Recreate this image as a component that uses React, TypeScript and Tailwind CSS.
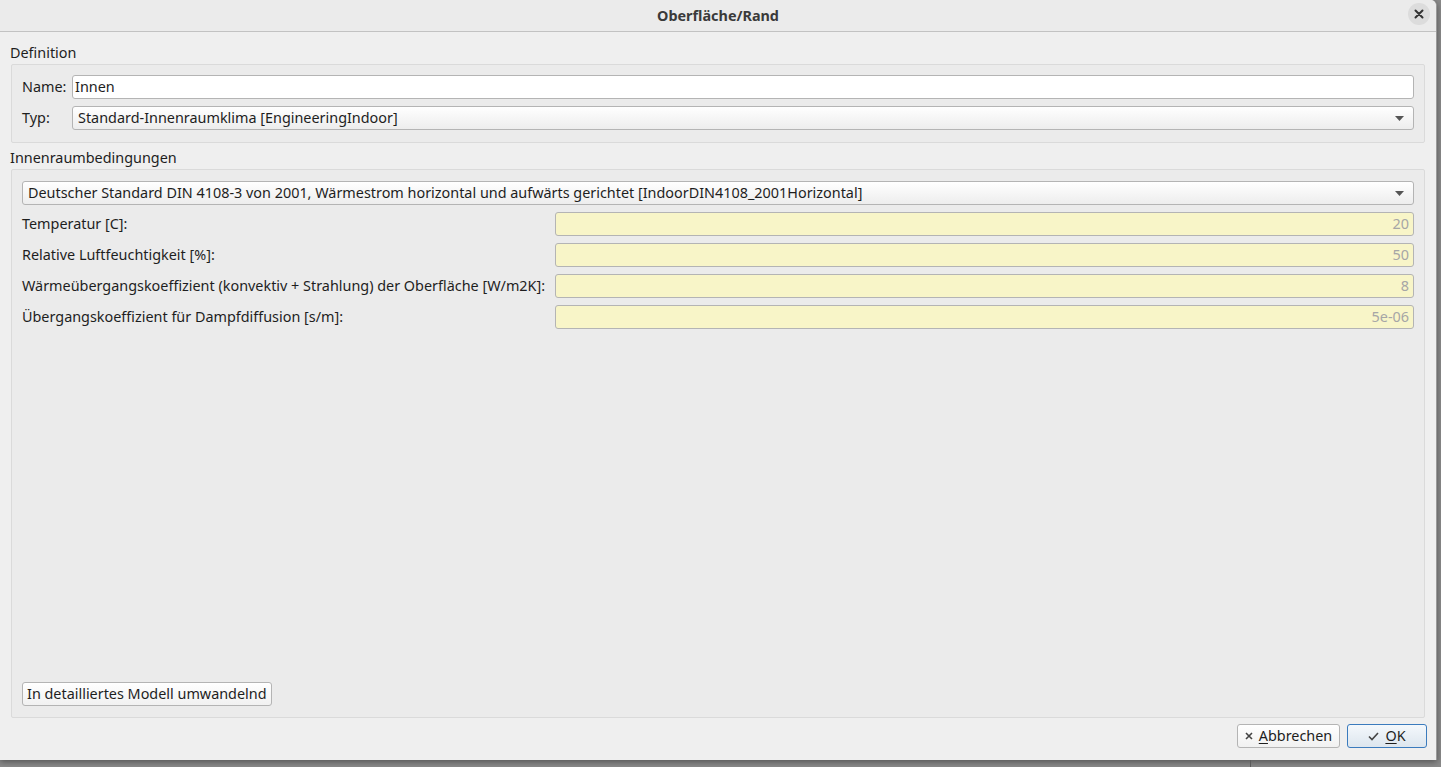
import React from "react";

// ----------------------------------------------------
// Dialog: Oberfläche/Rand (Innenraumklima)
// ----------------------------------------------------

type Param = { label: string; value: string };

const params: Param[] = [
  { label: "Temperatur [C]:", value: "20" },
  { label: "Relative Luftfeuchtigkeit [%]:", value: "50" },
  {
    label:
      "Wärmeübergangskoeffizient (konvektiv + Strahlung) der Oberfläche [W/m2K]:",
    value: "8",
  },
  { label: "Übergangskoeffizient für Dampfdiffusion [s/m]:", value: "5e-06" },
];

function ComboBox({ text }: { text: string }) {
  return (
    <div className="flex h-6 items-center justify-between rounded-[3px] border border-[#b4b4b4] bg-gradient-to-b from-white to-[#ededed] pl-[5px] pr-[9px]">
      <span className="truncate">{text}</span>
      {/* kleiner Dropdown-Pfeil */}
      <svg width="9" height="5" viewBox="0 0 9 5" className="shrink-0">
        <path d="M0 0 H9 L4.5 5 Z" fill="#555" />
      </svg>
    </div>
  );
}

function GroupBox({
  title,
  className,
  children,
}: {
  title: string;
  className?: string;
  children: React.ReactNode;
}) {
  return (
    <div className={`flex flex-col ${className ?? ""}`}>
      <div className="h-[22px] pl-[10px] leading-[22px]">{title}</div>
      <div className="mx-[11px] flex flex-1 flex-col rounded-[2px] border border-[#dadada] bg-[#ebebeb] px-[10px]">
        {children}
      </div>
    </div>
  );
}

export default function App() {
  return (
    <div
      className="relative h-[767px] w-[1441px] overflow-hidden bg-[#8a8a8a] text-[14.4px] text-[#1e1e1e]"
      style={{ fontFamily: '"Noto Sans", "Open Sans", sans-serif' }}
    >
      {/* Fenster */}
      <div className="flex h-[760px] w-[1437px] flex-col overflow-hidden rounded-tr-[6px] border-r border-[#9a9a9a] bg-[#efefef] shadow-[0_2px_6px_rgba(0,0,0,0.4)]">
        {/* Titelleiste */}
        <div className="relative flex h-8 shrink-0 items-center justify-center border-b border-[#c2c2c2] bg-[#ebebeb]">
          <span className="font-bold text-[#3a3a3a]">Oberfläche/Rand</span>
          <button className="absolute right-[6px] top-[3px] flex h-[22px] w-[22px] items-center justify-center rounded-full bg-[#dcdcdc]">
            <svg width="10" height="10" viewBox="0 0 10 10">
              <path
                d="M1.5 1.5 L8.5 8.5 M8.5 1.5 L1.5 8.5"
                stroke="#333"
                strokeWidth="2"
                strokeLinecap="round"
              />
            </svg>
          </button>
        </div>

        {/* Definition */}
        <GroupBox title="Definition" className="mt-[10px] h-[101px] shrink-0">
          <div className="mt-[10px] flex h-6 items-center">
            <span className="w-[50px]">Name:</span>
            <div className="flex h-6 flex-1 items-center rounded-[3px] border border-[#b4b4b4] bg-white pl-[2px]">
              Innen
            </div>
          </div>
          <div className="mt-[7px] flex h-6 items-center">
            <span className="w-[50px]">Typ:</span>
            <div className="flex-1">
              <ComboBox text="Standard-Innenraumklima [EngineeringIndoor]" />
            </div>
          </div>
        </GroupBox>

        {/* Innenraumbedingungen */}
        <GroupBox
          title="Innenraumbedingungen"
          className="mt-[4px] h-[571px] shrink-0"
        >
          <div className="mt-[11px]">
            <ComboBox text="Deutscher Standard DIN 4108-3 von 2001, Wärmestrom horizontal und aufwärts gerichtet [IndoorDIN4108_2001Horizontal]" />
          </div>
          <div className="mt-[7px] flex flex-col gap-[7px]">
            {params.map((p) => (
              <div key={p.label} className="flex h-6 items-center">
                <span className="w-[533px] shrink-0 whitespace-nowrap">
                  {p.label}
                </span>
                <div className="flex h-6 flex-1 items-center justify-end rounded-[3px] border border-[#b4b4b4] bg-[#f8f5c8] pr-[4px] text-[#a6a6a6]">
                  {p.value}
                </div>
              </div>
            ))}
          </div>
          <div className="mt-auto mb-[11px]">
            <button className="h-6 rounded-[3px] border border-[#b4b4b4] bg-gradient-to-b from-white to-[#f1f1f1] px-[4px] leading-[22px]">
              In detailliertes Modell umwandelnd
            </button>
          </div>
        </GroupBox>

        {/* Buttons unten */}
        <div className="mt-[6px] flex justify-end gap-[7px] pr-[9px]">
          <button className="flex h-6 w-[103px] items-center justify-center gap-[6px] rounded-[3px] border border-[#b4b4b4] bg-gradient-to-b from-white to-[#f1f1f1]">
            <svg width="8" height="8" viewBox="0 0 8 8">
              <path
                d="M1 1 L7 7 M7 1 L1 7"
                stroke="#444"
                strokeWidth="1.6"
              />
            </svg>
            <span>
              <span className="underline underline-offset-2">A</span>bbrechen
            </span>
          </button>
          <button className="flex h-6 w-[80px] items-center justify-center gap-[6px] rounded-[3px] border border-[#3b7bbd] bg-gradient-to-b from-[#f4f8fc] to-[#dde6ee]">
            <svg width="11" height="9" viewBox="0 0 11 9">
              <path
                d="M1 4.5 L4 7.5 L10 1"
                stroke="#444"
                strokeWidth="1.6"
                fill="none"
              />
            </svg>
            <span>
              <span className="underline underline-offset-2">O</span>K
            </span>
          </button>
        </div>
      </div>

      {/* Hintergrundfenster unten */}
      <div className="absolute left-[1250px] top-[760px] h-[7px] w-px bg-[#5a5a5a]" />
    </div>
  );
}
